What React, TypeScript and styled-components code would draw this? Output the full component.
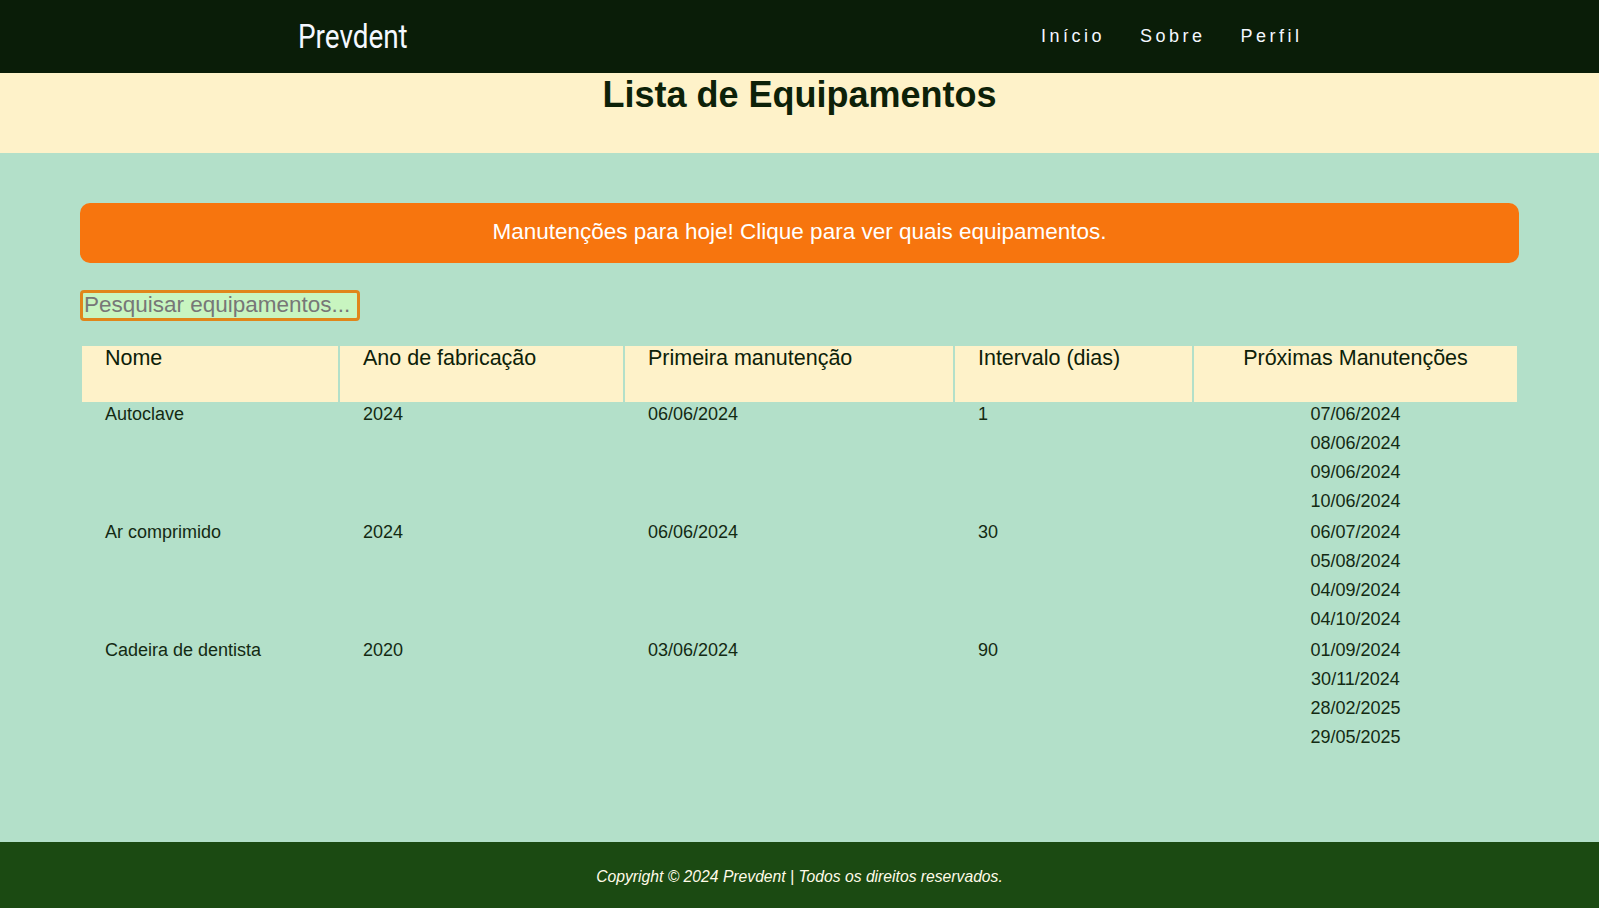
import styled, { createGlobalStyle } from 'styled-components';

type Equipment = {
  name: string;
  year: number;
  first: string;
  interval: number;
  next: string[];
};

const EQUIPMENTS: Equipment[] = [
  {
    name: 'Autoclave',
    year: 2024,
    first: '06/06/2024',
    interval: 1,
    next: ['07/06/2024', '08/06/2024', '09/06/2024', '10/06/2024'],
  },
  {
    name: 'Ar comprimido',
    year: 2024,
    first: '06/06/2024',
    interval: 30,
    next: ['06/07/2024', '05/08/2024', '04/09/2024', '04/10/2024'],
  },
  {
    name: 'Cadeira de dentista',
    year: 2020,
    first: '03/06/2024',
    interval: 90,
    next: ['01/09/2024', '30/11/2024', '28/02/2025', '29/05/2025'],
  },
];

const GlobalStyle = createGlobalStyle`
  * {
    box-sizing: border-box;
  }
  body {
    margin: 0;
    font-family: "Liberation Sans", Arial, sans-serif;
    background: #b3e0c9;
  }
`;

function App() {
  return (
    <Page>
      <GlobalStyle />
      <TopBar>
        <TopBarInner>
          <Logo>Prevdent</Logo>
          <Nav>
            <NavLink href="#">Início</NavLink>
            <NavLink href="#">Sobre</NavLink>
            <NavLink href="#">Perfil</NavLink>
          </Nav>
        </TopBarInner>
      </TopBar>
      <TitleBand>
        <h1>Lista de Equipamentos</h1>
      </TitleBand>
      <Main>
        <Content>
          <Alert type="button">
            Manutenções para hoje! Clique para ver quais equipamentos.
          </Alert>
          <Search placeholder="Pesquisar equipamentos..." />
          <Table>
            <thead>
              <tr>
                <Th $width={256}>Nome</Th>
                <Th $width={283}>Ano de fabricação</Th>
                <Th $width={328}>Primeira manutenção</Th>
                <Th $width={237}>Intervalo (dias)</Th>
                <Th $center>Próximas Manutenções</Th>
              </tr>
            </thead>
            <tbody>
              {EQUIPMENTS.map((eq) => (
                <tr key={eq.name}>
                  <Td>{eq.name}</Td>
                  <Td>{eq.year}</Td>
                  <Td>{eq.first}</Td>
                  <Td>{eq.interval}</Td>
                  <DatesCell>
                    {eq.next.map((d) => (
                      <DateItem key={d}>{d}</DateItem>
                    ))}
                  </DatesCell>
                </tr>
              ))}
            </tbody>
          </Table>
        </Content>
      </Main>
      <Footer>
        <p>Copyright © 2024 Prevdent | Todos os direitos reservados.</p>
      </Footer>
    </Page>
  );
}

const Page = styled.div`
  min-height: 100vh;
  display: flex;
  flex-direction: column;
`;

const TopBar = styled.header`
  background: #0a1d08;
  height: 73px;
  display: flex;
  align-items: center;
`;

const TopBarInner = styled.div`
  width: 1000px;
  margin: 0 auto;
  display: flex;
  justify-content: space-between;
  align-items: center;
`;

const Logo = styled.span`
  display: inline-block;
  font-family: Roboto, "Liberation Sans", sans-serif;
  font-size: 34px;
  color: #f4f8ff;
  transform: scaleX(0.82);
  transform-origin: left center;
  margin: -2px 0 0 -2px;
`;

const Nav = styled.nav`
  display: flex;
  gap: 35px;
  margin-right: -3px;
`;

const NavLink = styled.a`
  color: #f4f8ff;
  text-decoration: none;
  font-size: 18px;
  letter-spacing: 3.5px;
`;

const TitleBand = styled.section`
  background: #fef2c9;
  padding: 1px 0 37px;
  text-align: center;

  h1 {
    margin: 0;
    font-size: 36px;
    font-weight: bold;
    color: #0d2108;
  }
`;

const Main = styled.main`
  flex: 1;
  background: #b3e0c9;
  padding: 50px 0 40px;
`;

const Content = styled.div`
  width: 90%;
  margin: 0 auto;
`;

const Alert = styled.button`
  display: block;
  width: 100%;
  height: 60px;
  border: none;
  border-radius: 10px;
  background: #f7750e;
  color: #ffffff;
  font-family: "Liberation Sans", Arial, sans-serif;
  font-size: 22.5px;
  text-align: center;
  cursor: pointer;
  padding: 0 0 3px;
  margin-bottom: 27px;
`;

const Search = styled.input`
  display: block;
  width: 280px;
  height: 31px;
  border: 3px solid #e0861a;
  border-radius: 4px;
  background: #c8f5c0;
  padding: 0 1px 1px;
  font-family: "Liberation Sans", Arial, sans-serif;
  font-size: 22.5px;
  color: #333;
  margin-bottom: 23px;

  &::placeholder {
    color: #777;
  }
`;

const Table = styled.table`
  width: 100%;
  table-layout: fixed;
  border-spacing: 2px;
  color: #132a13;
`;

const Th = styled.th<{ $width?: number; $center?: boolean }>`
  width: ${(p) => (p.$width ? `${p.$width}px` : 'auto')};
  height: 56px;
  background: #fef2c9;
  font-size: 21.5px;
  font-weight: normal;
  text-align: ${(p) => (p.$center ? 'center' : 'left')};
  vertical-align: top;
  padding: 0 23px;
  color: #0d2108;
`;

const Td = styled.td`
  font-size: 18px;
  line-height: 21px;
  vertical-align: top;
  padding: 0 23px;
`;

const DatesCell = styled.td`
  font-size: 18px;
  text-align: center;
  vertical-align: top;
  padding: 0;
`;

const DateItem = styled.div`
  line-height: 21px;
  margin-bottom: 8px;
`;

const Footer = styled.footer`
  background: #1b4a12;
  padding: 26px 0 22px;
  text-align: center;

  p {
    margin: 0;
    font-size: 15.7px;
    font-style: italic;
    color: #fffbe8;
  }
`;

export default App;
